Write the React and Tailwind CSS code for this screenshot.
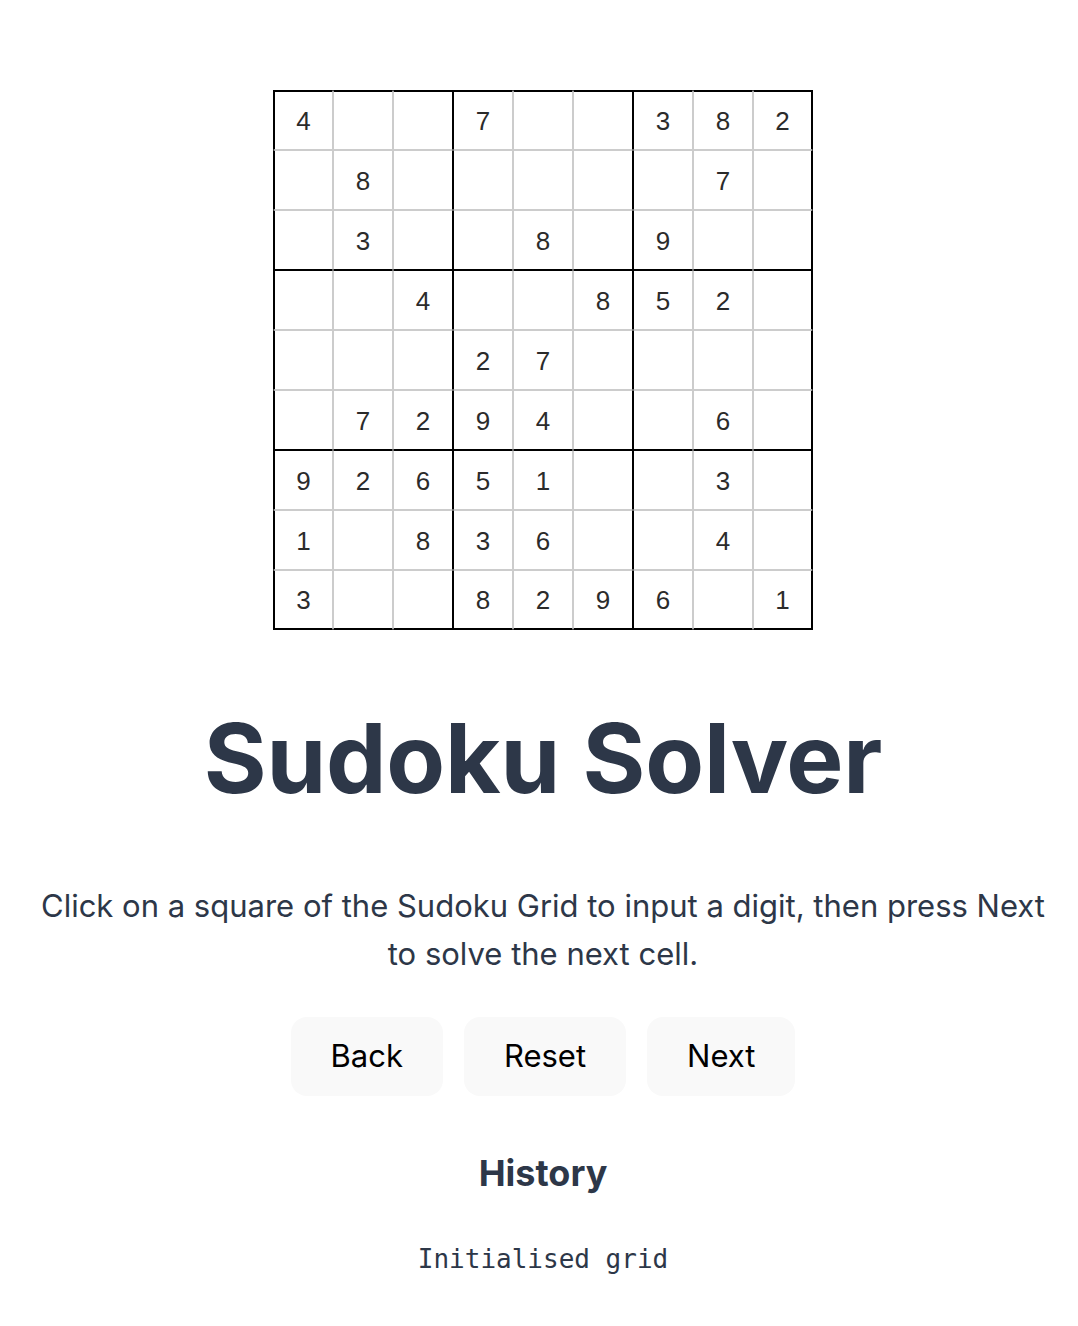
import React from "react";

const GRID = [
  [4, 0, 0, 7, 0, 0, 3, 8, 2],
  [0, 8, 0, 0, 0, 0, 0, 7, 0],
  [0, 3, 0, 0, 8, 0, 9, 0, 0],
  [0, 0, 4, 0, 0, 8, 5, 2, 0],
  [0, 0, 0, 2, 7, 0, 0, 0, 0],
  [0, 7, 2, 9, 4, 0, 0, 6, 0],
  [9, 2, 6, 5, 1, 0, 0, 3, 0],
  [1, 0, 8, 3, 6, 0, 0, 4, 0],
  [3, 0, 0, 8, 2, 9, 6, 0, 1],
];

function Cell({ v, r, c }) {
  const left = c === 0 ? "border-l-2 border-l-black" : c % 3 === 0 ? "border-l border-l-black" : "border-l border-l-[#cccccc]";
  const right = c === 8 ? "border-r-2 border-r-black" : c % 3 === 2 ? "border-r border-r-black" : "border-r border-r-[#cccccc]";
  const top = r === 0 ? "border-t-2 border-t-black" : r % 3 === 0 ? "border-t border-t-black" : "border-t border-t-[#cccccc]";
  const bottom = r === 8 ? "border-b-2 border-b-black" : r % 3 === 2 ? "border-b border-b-black" : "border-b border-b-[#cccccc]";
  return (
    <div
      className={`box-border h-[60px] w-[60px] flex items-center justify-center pt-[2px] text-[26px] text-[#2b2b2b] ${left} ${right} ${top} ${bottom}`}
      style={{ fontFamily: '"Liberation Sans", Arial, sans-serif' }}
    >
      {v ? v : ""}
    </div>
  );
}

export default function App() {
  return (
    <div
      className="min-h-[1326px] bg-white flex flex-col items-center pl-2 text-[#2d3748]"
      style={{ fontFamily: 'Inter, "Noto Sans", sans-serif' }}
    >
      <div className="mt-[90px] grid grid-cols-[repeat(9,60px)]">
        {GRID.map((row, r) =>
          row.map((v, c) => <Cell key={`${r}-${c}`} v={v} r={r} c={c} />)
        )}
      </div>

      <h1 className="mt-[78px] text-[96px] leading-[100px] font-bold tracking-[-0.2px]">
        Sudoku Solver
      </h1>

      <p className="mt-[74px] w-[1010px] text-center text-[31px] leading-[48px]">
        Click on a square of the Sudoku Grid to input a digit, then press Next to solve the next cell.
      </p>

      <div className="mt-[39px] flex gap-[21px]">
        {["Back", "Reset", "Next"].map((b) => (
          <button
            key={b}
            className="h-[79px] px-10 rounded-2xl bg-[#f9f9f9] text-black text-[31px]"
          >
            {b}
          </button>
        ))}
      </div>

      <h2 className="mt-[54px] text-[36px] leading-[46px] font-bold">History</h2>

      <div
        className="mt-[44px] text-[26px] leading-[39px]"
        style={{ fontFamily: '"DejaVu Sans Mono", monospace' }}
      >
        Initialised grid
      </div>
    </div>
  );
}
